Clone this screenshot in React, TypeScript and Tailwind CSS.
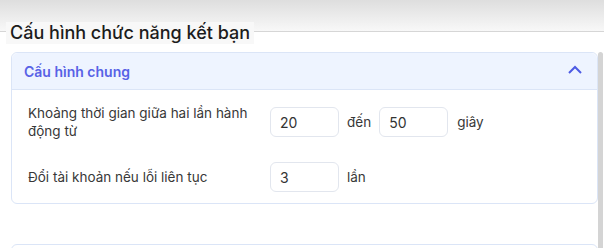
import React from 'react';

const NumInput: React.FC<{ value: string }> = ({ value }) => (
  <input
    readOnly
    value={value}
    className="w-[69px] h-[30px] rounded-md border border-[#e2e6ee] bg-white px-[9px] text-[14px] text-[#333] outline-none"
  />
);

const App: React.FC = () => {
  return (
    <div className="relative w-[604px] h-[248px] overflow-hidden bg-white font-['Inter',sans-serif]">
      {/* top shade + fieldset line */}
      <div className="h-[32px] bg-gradient-to-b from-[#dedede] to-[#f8f8f8] border-b border-[#d6d6d6]" />
      <div className="-mt-[10px] ml-[6px] w-fit bg-[#f8f8f8] px-1 text-[18px] leading-[22px] font-medium text-[#1c1c1c]">
        Cấu hình chức năng kết bạn
      </div>

      <div className="mt-[8px] ml-[11px] w-[587px] rounded-md border border-[#dbe5f7]">
        <div className="flex items-center justify-between h-[37px] rounded-t-md bg-[#eef4ff] border-b border-[#dbe5f7] pl-[12px] pr-[14px]">
          <span className="text-[14px] font-semibold text-[#5862e6]">Cấu hình chung</span>
          <svg width="16" height="10" viewBox="0 0 16 10" className="-mt-[2px]">
            <polyline points="2,8 8,2 14,8" fill="none" stroke="#4d5be4" strokeWidth="2" />
          </svg>
        </div>
        <div className="flex flex-col gap-[22px] pl-[16px] pt-[14px] pb-[11px]">
          <div className="flex items-center">
            <div className="w-[230px] mr-[12px] text-[13.5px] leading-[18px] text-[#383838]">
              Khoảng thời gian giữa hai lần hành động từ
            </div>
            <NumInput value="20" />
            <span className="mx-[8px] text-[13.5px] text-[#383838]">đến</span>
            <NumInput value="50" />
            <span className="ml-[9px] text-[13.5px] text-[#383838]">giây</span>
          </div>
          <div className="flex items-center">
            <div className="w-[230px] mr-[12px] text-[13.5px] leading-[18px] text-[#383838]">
              Đổi tài khoản nếu lỗi liên tục
            </div>
            <NumInput value="3" />
            <span className="ml-[8px] text-[13.5px] text-[#383838]">lần</span>
          </div>
        </div>
      </div>

      <div className="mt-[40px] ml-[11px] w-[587px] h-[20px] rounded-t-md border border-[#dbe5f7]" />

      <div className="absolute right-[1px] top-[52px] w-[5px] h-[196px] rounded-t-sm bg-[#d4d4d4]" />
    </div>
  );
};

export default App;
